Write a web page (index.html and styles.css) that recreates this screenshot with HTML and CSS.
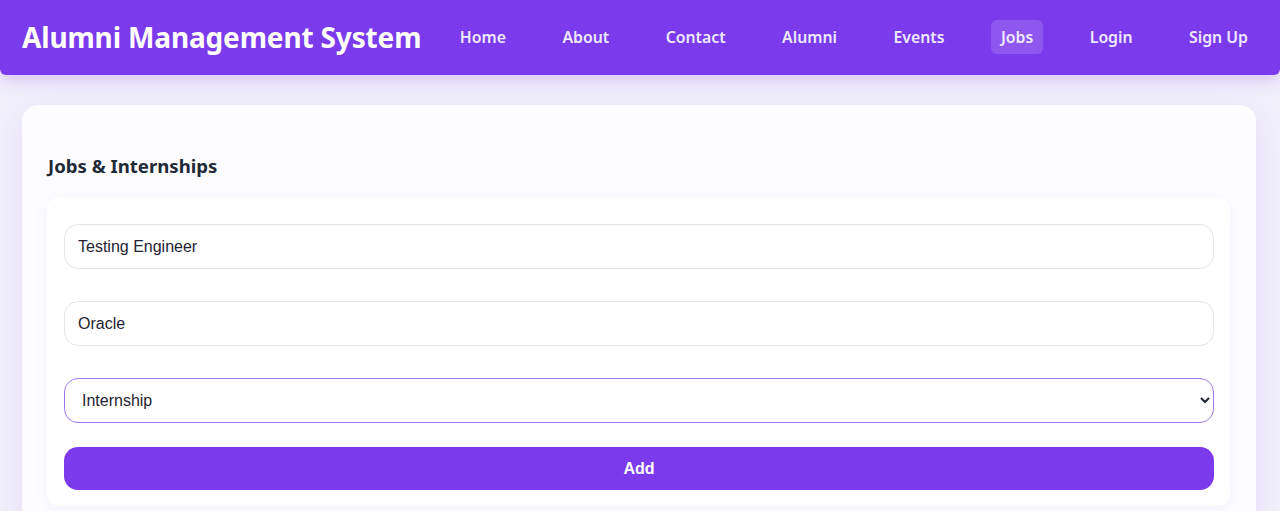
FILE: index.html
```html
<!DOCTYPE html>
<html lang="en">
<head>
<meta charset="utf-8">
<title>Alumni Management System</title>
<link rel="stylesheet" href="styles.css">
</head>
<body>
<header class="topbar">
  <h1 class="brand">Alumni Management System</h1>
  <nav class="nav">
    <a href="#" class="nav-link">Home</a>
    <a href="#" class="nav-link">About</a>
    <a href="#" class="nav-link">Contact</a>
    <a href="#" class="nav-link">Alumni</a>
    <a href="#" class="nav-link">Events</a>
    <a href="#" class="nav-link active">Jobs</a>
    <a href="#" class="nav-link">Login</a>
    <a href="#" class="nav-link">Sign Up</a>
  </nav>
</header>
<main class="page">
  <section class="card">
    <h2 class="card-title">Jobs &amp; Internships</h2>
    <form class="job-form">
      <input class="field" type="text" value="Testing Engineer">
      <input class="field" type="text" value="Oracle">
      <select class="field select">
        <option>Internship</option>
        <option>Full-time</option>
      </select>
      <button type="button" class="btn">Add</button>
    </form>
  </section>
</main>
</body>
</html>
```
FILE: styles.css
```css
* { box-sizing: border-box; }
html, body { margin: 0; padding: 0; }
body {
  background: #f2f0fb;
  font-family: "Noto Sans", "Open Sans", sans-serif;
  height: 511px;
  overflow: hidden;
}
.topbar {
  height: 75px;
  background: #7c3aed;
  display: flex;
  align-items: center;
  justify-content: space-between;
  padding: 0 22px 2px;
  border-radius: 0 0 6px 6px;
  box-shadow: 0 4px 18px rgba(124, 58, 237, 0.28);
}
.brand {
  margin: 0;
  color: #ffffff;
  font-size: 28px;
  font-weight: 700;
  letter-spacing: -0.15px;
}
.nav {
  display: flex;
  align-items: center;
  gap: 36.5px;
}
.nav-link {
  color: #ede9fe;
  text-decoration: none;
  font-size: 15.8px;
  font-weight: 600;
  padding: 6px 10px;
  border-radius: 6px;
}
.nav-link.active {
  background: rgba(255, 255, 255, 0.15);
}
.page {
  padding: 30px 24px 0 22px;
}
.card {
  background: #fdfdff;
  border-radius: 16px;
  padding: 48px 26px 24px 25px;
  box-shadow: 0 8px 30px rgba(124, 58, 237, 0.10);
}
.card-title {
  margin: 0 0 19px 1px;
  font-size: 18.6px;
  font-weight: 700;
  color: #1f2937;
}
.job-form {
  background: #ffffff;
  border-radius: 12px;
  padding: 27px 16px 16px 17px;
  display: flex;
  flex-direction: column;
  box-shadow: 0 4px 16px rgba(124, 58, 237, 0.08);
}
.field {
  height: 45px;
  width: 100%;
  border: 1px solid #e4e4e7;
  border-radius: 14px;
  padding: 0 13px;
  font-family: "Liberation Sans", Arial, sans-serif;
  font-size: 16px;
  color: #1f2433;
  background: #ffffff;
  margin-bottom: 32px;
  outline: none;
}
.select {
  border-color: #9f7ae8;
  margin-bottom: 24px;
  padding: 0 12px 0 13px;
}
.btn {
  height: 43px;
  width: 100%;
  border: none;
  border-radius: 14px;
  background: #7c3aed;
  color: #ffffff;
  font-family: "Liberation Sans", Arial, sans-serif;
  font-size: 16px;
  font-weight: 700;
  cursor: pointer;
}
```
